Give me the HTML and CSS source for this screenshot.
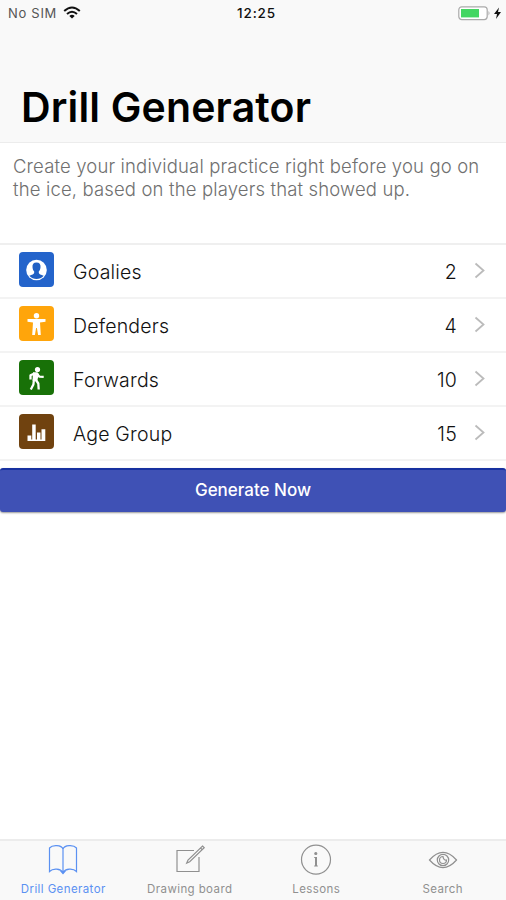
FILE: index.html
```html
<!DOCTYPE html>
<html lang="en">
<head>
<meta charset="utf-8">
<title>Drill Generator</title>
<link rel="stylesheet" href="styles.css">
</head>
<body>
<div class="app">
  <header class="header">
    <div class="status">
      <div class="carrier"><span>No SIM</span>
        <svg class="wifi" width="18" height="13" viewBox="0 0 18 13"><g fill="none" stroke="#111" stroke-width="2"><path d="M1.200 5Q9-2 16.800 5"/><path d="M4 8Q9 3.500 14 8"/></g><path d="M6.300 9.900Q9 7.700 11.700 9.900L9 12.600z" fill="#111"/></svg>
      </div>
      <time class="clock">12:25</time>
      <svg class="battery" width="44" height="15" viewBox="0 0 44 15"><rect x=".8" y=".8" width="28.400" height="12.800" rx="3" fill="#fff" stroke="#aaa" stroke-width="1.200"/><rect x="3" y="3" width="18" height="8.400" fill="#43d662"/><path d="M30.500 5q2 2 0 4.500z" fill="#aaa"/><path d="M41 1.500L36 8h3l-1 5 5-7h-3z" fill="#111"/></svg>
    </div>
    <h1 class="title">Drill Generator</h1>
  </header>
  <main class="content">
    <p class="intro">Create your individual practice right before you go on<br>the ice, based on the players that showed up.</p>
    <ul class="list">
      <li class="row">
        <span class="badge blue"><svg width="35" height="35" viewBox="0 0 35 35"><circle cx="17.500" cy="18" r="10.300" fill="#fff"/><path d="M17.500 10.500c-3 0-4.300 1.900-4 4.700.2 2.200.9 3.400 1.700 4.300.2 2.200-.7 3-4.900 4.200 3.900 4.400 10.500 4.400 14.400 0-4.200-1.200-5.100-2-4.900-4.200.8-.9 1.500-2.100 1.700-4.300.3-2.800-1-4.700-4-4.700z" fill="#1f5fc4"/></svg></span>
        <span class="label">Goalies</span><span class="value">2</span>
        <svg class="chevron" width="12" height="17" viewBox="0 0 12 17"><path d="M1.500 1.500l8 7-8 7"/></svg>
      </li>
      <li class="row">
        <span class="badge orange"><svg width="35" height="35" viewBox="0 0 35 35"><circle cx="17.500" cy="9.800" r="2.700" fill="#fff"/><path d="M8.500 13h18v2.800l-5.500.8.800 12.400h-2.700l-1.200-7h-.8l-1.200 7h-2.700l.8-12.400-5.500-.8z" fill="#fff"/></svg></span>
        <span class="label">Defenders</span><span class="value">4</span>
        <svg class="chevron" width="12" height="17" viewBox="0 0 12 17"><path d="M1.500 1.500l8 7-8 7"/></svg>
      </li>
      <li class="row">
        <span class="badge green"><svg width="35" height="35" viewBox="0 0 35 35"><circle cx="18.500" cy="9.500" r="2.600" fill="#fff"/><g fill="none" stroke="#fff" stroke-width="2.300" stroke-linejoin="round"><path d="M15.500 13.500l-4 1.800v4.200M18 14l2.500 2.700 4.200.2M15 19l-.6 5.500-2.600 5M17 20l2.300 3.500.4 6"/></g><path d="M14 12.300h4.500l1.500 2-2 7.200-4.500-.8z" fill="#fff"/></svg></span>
        <span class="label">Forwards</span><span class="value">10</span>
        <svg class="chevron" width="12" height="17" viewBox="0 0 12 17"><path d="M1.500 1.500l8 7-8 7"/></svg>
      </li>
      <li class="row">
        <span class="badge brown"><svg width="35" height="35" viewBox="0 0 35 35"><path d="M8.500 21.500h3.800V27H8.500zM13.200 10.500h3.500V27h-3.500zM18 18.500h3.500V27H18zM22.500 15.200h3.800V27h-3.800zM8.500 25.500h17.800V27H8.500z" fill="#fff"/></svg></span>
        <span class="label">Age Group</span><span class="value">15</span>
        <svg class="chevron" width="12" height="17" viewBox="0 0 12 17"><path d="M1.500 1.500l8 7-8 7"/></svg>
      </li>
    </ul>
    <button class="generate"><span>Generate Now</span></button>
  </main>
  <nav class="tabs">
    <a class="tab active"><svg width="32" height="32" viewBox="0 0 32 32"><path d="M16 5C14.500 1 5.500.500 2.500 4v23.500C6 24 13.500 24.500 16 28.500c2.500-4 10-4.500 13.500-1V4C26.500.500 17.500 1 16 5zM16 5v23"/><path d="M14.300 27.500h3.400L16 29.500z" fill="currentColor"/></svg><span>Drill Generator</span></a>
    <a class="tab"><svg width="32" height="32" viewBox="0 0 32 32"><path d="M20 6.500H3v21h22V13M28.500 2l1.700 1.700-14.500 14-3 1.300 1.300-3zM26.500 4l1.700 1.700"/></svg><span>Drawing board</span></a>
    <a class="tab"><svg width="32" height="32" viewBox="0 0 32 32"><circle cx="16" cy="15.600" r="14.500"/><path d="M16 13v9" stroke-width="2"/><path d="M14.200 13.500H16M14.200 22h3.600"/><circle cx="15.800" cy="9.500" r="1" fill="currentColor"/></svg><span>Lessons</span></a>
    <a class="tab"><svg width="32" height="32" viewBox="0 0 32 32"><path d="M2.500 16Q16 .8 29.500 16 16 31.200 2.500 16z"/><circle cx="16" cy="16" r="5.700"/><path d="M16 12.500a3.500 3.500 0 1 0 3.500 3.500q-3 .5-3.500-3.500z"/></svg><span>Search</span></a>
  </nav>
</div>
</body>
</html>
```
FILE: styles.css
```css
* { box-sizing: border-box; }
body { margin: 0; background: #fff; font-family: Inter, "Liberation Sans", sans-serif; color: #111; }
.app { height: 900px; display: flex; flex-direction: column; overflow: hidden; }
.header { height: 143px; background: #f9f9f9; border-bottom: 1px solid #ececec; }
.status { display: grid; grid-template-columns: 1fr auto 1fr; align-items: center; height: 26px; padding: 0 4px 0 8px; font-size: 13px; }
.carrier { display: flex; align-items: center; gap: 6px; color: #555; letter-spacing: .7px; }
.clock { margin-left: 3px; font-size: 13.500px; font-weight: 500; letter-spacing: .9px; }
.wifi { margin-top: -1px; }
.battery { justify-self: end; }
.title { margin: 56px 0 0 21px; font-size: 41px; line-height: 50px; font-weight: 600; letter-spacing: .15px; color: #000; white-space: nowrap; }
.content { flex: 1; }
.intro { margin: 0; height: 100px; padding: 12px 0 0 13px; font-size: 18.500px; line-height: 23px; font-weight: 300; letter-spacing: .15px; color: #707070; white-space: nowrap; }
.list { margin: 0; padding: 0; list-style: none; border-top: 2px solid #efefef; }
.row { display: flex; align-items: center; height: 54px; padding: 0 20px 0 19px; border-bottom: 2px solid #f3f3f3; font-size: 19.500px; font-weight: 300; letter-spacing: .2px; color: #111; }
.badge { width: 35px; height: 35px; border-radius: 4px; margin-top: -3px; }
.badge svg { display: block; }
.blue { background: #2464cb; }
.orange { background: #ffa50b; }
.green { background: #187108; }
.brown { background: #70420f; }
.label { margin: 2px 0 0 19px; flex: 1; }
.value { margin: 1px 17px 0 0; }
.chevron { fill: none; stroke: #bbb; stroke-width: 1.800; margin-top: -2px; }
.generate { display: block; width: 100%; height: 44px; margin-top: 7px; padding: 0 0 3px; border: 0; border-top: 2px solid #1730a0; border-radius: 3px; background: #3f51b5; color: #fff; font: 500 17px Inter, "Liberation Sans", sans-serif; box-shadow: 0 1px 2px #999; }
.tabs { display: grid; grid-template-columns: repeat(4, 1fr); height: 61px; background: #f9f9f9; border-top: 2px solid #ececec; }
.tab { display: flex; flex-direction: column; align-items: center; padding-top: 3px; font-size: 11.500px; line-height: 14px; color: #909090; letter-spacing: .4px; white-space: nowrap; }
.tab span { margin-top: 6px; }
.tab svg { fill: none; stroke: currentColor; stroke-width: 1.200; }
.active { color: #5b91f2; }
```
